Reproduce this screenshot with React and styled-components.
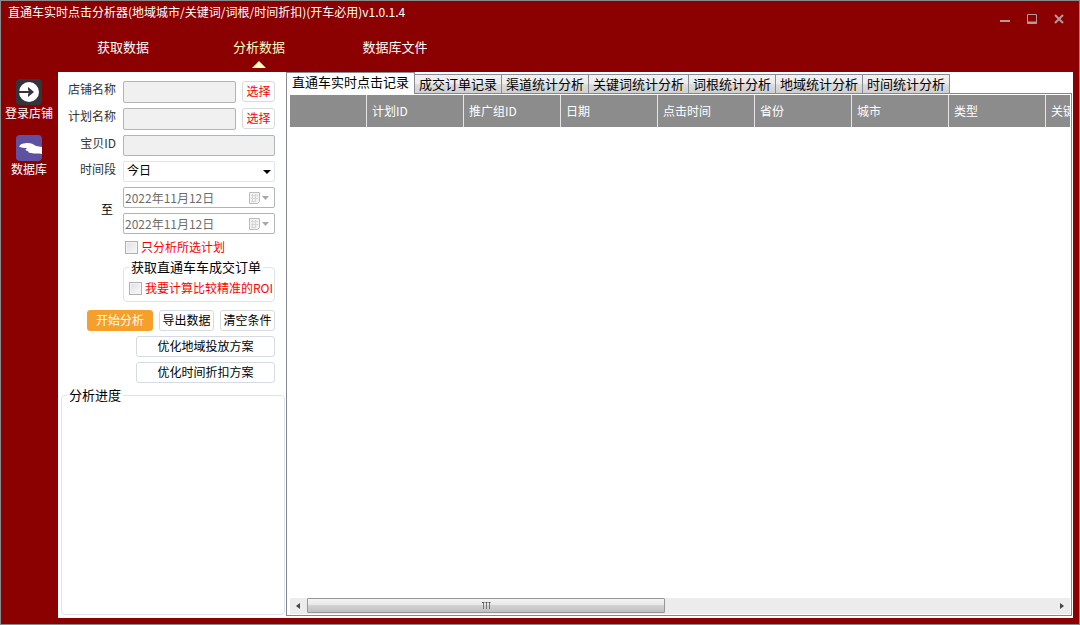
import { useState } from "react";
import styled, { createGlobalStyle } from "styled-components";

const menu = ["获取数据", "分析数据", "数据库文件"];
const abas = ["直通车实时点击记录", "成交订单记录", "渠道统计分析", "关键词统计分析", "词根统计分析", "地域统计分析", "时间统计分析"];
const colunas = ["", "计划ID", "推广组ID", "日期", "点击时间", "省份", "城市", "类型", "关键词"];

export default function App(){
    const [pagina, setPagina] = useState(1);
    const [aba, setAba] = useState(0);

    return (
        <Janela>
            <GlobalStyle />
            <Topo>
                <BarraTitulo>
                    <h1>直通车实时点击分析器(地域城市/关键词/词根/时间折扣)(开车必用)v1.0.1.4</h1>
                    <Controles>
                        <button aria-label="最小化"><svg width="11" height="11"><path d="M0 7h10" stroke="#b59a9a" strokeWidth="2" /></svg></button>
                        <button aria-label="最大化"><svg width="11" height="11"><path d="M.5 .5h9v9h-9z" fill="none" stroke="#b59a9a" /><path d="M0 8.5h10" stroke="#b59a9a" strokeWidth="2" /></svg></button>
                        <button aria-label="关闭"><svg width="11" height="11"><path d="M1 1l8 8M9 1l-8 8" stroke="#b59a9a" strokeWidth="2" /></svg></button>
                    </Controles>
                </BarraTitulo>
                <Menu>
                    {menu.map((m, i) => (
                        <ItemMenu key={m} $ativo={i === pagina} onClick={() => setPagina(i)}>
                            {m}
                            {i === pagina && <svg width="14" height="7"><path d="M7 0l7 7H0z" fill="#ffffc0" /></svg>}
                        </ItemMenu>
                    ))}
                </Menu>
            </Topo>
            <Corpo>
                <Lateral>
                    <Atalho>
                        <IconeEntrar />
                        登录店铺
                    </Atalho>
                    <Atalho>
                        <IconeBanco />
                        数据库
                    </Atalho>
                </Lateral>
                <Conteudo>
                    <Painel>
                        <Formulario>
                            <Linha $altura={22}>
                                <label htmlFor="loja">店铺名称</label>
                                <Campo id="loja" disabled />
                                <Botao $destaque>选择</Botao>
                            </Linha>
                            <Linha $altura={22}>
                                <label htmlFor="plano">计划名称</label>
                                <Campo id="plano" disabled />
                                <Botao $destaque>选择</Botao>
                            </Linha>
                            <Linha>
                                <label htmlFor="item">宝贝ID</label>
                                <Campo id="item" disabled />
                            </Linha>
                            <Linha>
                                <label htmlFor="periodo">时间段</label>
                                <Selecao>
                                    <select id="periodo" defaultValue="今日">
                                        <option>今日</option>
                                        <option>昨日</option>
                                    </select>
                                    <svg width="8" height="4"><path d="M0 0h8L4 4z" fill="#000" /></svg>
                                </Selecao>
                            </Linha>
                            <Periodo>
                                <span>至</span>
                                <Datas>
                                    <CampoData rotulo="开始日期" />
                                    <CampoData rotulo="结束日期" />
                                </Datas>
                            </Periodo>
                            <Opcoes>
                                <Marcador><input type="checkbox" />只分析所选计划</Marcador>
                                <Pedidos>
                                    <legend>获取直通车车成交订单</legend>
                                    <Marcador><input type="checkbox" />我要计算比较精准的ROI</Marcador>
                                </Pedidos>
                            </Opcoes>
                            <Acoes>
                                <Botao $principal $largura={66}>开始分析</Botao>
                                <Botao $largura={55}>导出数据</Botao>
                                <Botao $largura={55}>清空条件</Botao>
                                <Botao $largura={139}>优化地域投放方案</Botao>
                                <Botao $largura={139}>优化时间折扣方案</Botao>
                            </Acoes>
                        </Formulario>
                        <Progresso>
                            <legend>分析进度</legend>
                        </Progresso>
                    </Painel>
                    <Registros>
                        <Abas role="tablist">
                            {abas.map((a, i) => (
                                <Aba key={a} role="tab" aria-selected={i === aba} $ativa={i === aba} onClick={() => setAba(i)}>{a}</Aba>
                            ))}
                        </Abas>
                        <Quadro>
                            <AreaTabela>
                                <Tabela>
                                    <thead>
                                        <tr>{colunas.map((c, i) => <th key={i}>{c}</th>)}</tr>
                                    </thead>
                                </Tabela>
                            </AreaTabela>
                            <Rolagem>
                                <svg width="17" height="16"><path d="M10 5v6L6 8z" fill="#444" /></svg>
                                <Trilho>
                                    <Alca><svg width="9" height="7"><path d="M1.5 0v7M4.5 0v7M7.5 0v7" stroke="#777" /><path d="M0 .5h2.5M3.5 .5h2M6.5 .5h2" stroke="#555" /></svg></Alca>
                                </Trilho>
                                <svg width="17" height="16"><path d="M7 5v6l4-3z" fill="#444" /></svg>
                            </Rolagem>
                        </Quadro>
                    </Registros>
                </Conteudo>
            </Corpo>
        </Janela>
    );
}

function CampoData({ rotulo }){
    return (
        <Data>
            <input aria-label={rotulo} defaultValue="2022年11月12日" disabled />
            <svg width="22" height="14">
                <path d="M.5 1.5h10v9l-2 2h-8z" fill="#f2f2f2" stroke="#bdbdbd" />
                <path d="M2 4.5h7M2 7.5h7M2 10.5h5M3.5 3v8M6.5 3v8" stroke="#d6d6d6" />
                <path d="M13 5h7l-3.5 4z" fill="#a8a8a8" />
            </svg>
        </Data>
    );
}

function IconeEntrar(){
    return (
        <svg width="26" height="26" viewBox="0 0 26 26">
            <rect width="26" height="26" rx="4" fill="#32353d" />
            <circle cx="13" cy="13" r="10" fill="#fff" />
            <path d="M3 13h12" stroke="#32353d" strokeWidth="2" />
            <path d="M12 8l6 5-6 5v-3l2-2-2-2z" fill="#32353d" />
        </svg>
    );
}

function IconeBanco(){
    return (
        <svg width="26" height="26" viewBox="0 0 26 26">
            <rect width="26" height="26" rx="4" fill="#5e52a0" />
            <path d="M3 11.5C4 9 8 8 12 8c3 0 5 1 8 3l6 1v7c-4-1-7 0-11-1-2 0-3-1-3-2-2 0-3-1-2-2l1-1c-3 0-6 0-8-1.5z" fill="#fff" />
        </svg>
    );
}

const GlobalStyle = createGlobalStyle`
    *{
        box-sizing: border-box;
    }
    body{
        margin: 0;
        font-family: "Noto Sans CJK SC", sans-serif;
        font-size: 12px;
        line-height: 16px;
        color: #000000;
    }
    button, input, select{
        font: inherit;
        color: inherit;
        margin: 0;
        padding: 0;
    }
    svg{
        display: block;
        flex-shrink: 0;
    }
`;

const Janela = styled.div`
    height: 100vh;
    display: flex;
    flex-direction: column;
    background-color: #8b0000;
    border: 1px solid #8a8a8a;
    padding: 0 6px 6px 0;
`;
const Topo = styled.header`
    height: 71px;
    color: #ffffff;
`;
const BarraTitulo = styled.div`
    display: flex;
    justify-content: space-between;
    height: 36px;
    padding: 3px 8px 0 7px;
    h1{
        margin: 0;
        font-size: 12px;
        font-weight: 400;
    }
`;
const Controles = styled.div`
    display: flex;
    gap: 16px;
    padding-top: 10px;
    button{
        width: 11px;
        height: 11px;
        border: none;
        background: none;
    }
`;
const Menu = styled.nav`
    display: flex;
    padding-left: 54px;
`;
const ItemMenu = styled.button`
    width: 136px;
    height: 35px;
    display: flex;
    flex-direction: column;
    align-items: center;
    gap: 6px;
    padding-top: 2px;
    border: none;
    background: none;
    font-size: 13px;
    color: ${props => props.$ativo ? '#ffffc0' : '#ffffff'};
`;
const Corpo = styled.div`
    flex: 1;
    min-height: 0;
    display: flex;
`;
const Lateral = styled.aside`
    width: 57px;
    flex-shrink: 0;
    display: flex;
    flex-direction: column;
    gap: 14px;
    padding: 7px 1px 0 0;
`;
const Atalho = styled.button`
    display: flex;
    flex-direction: column;
    align-items: center;
    border: none;
    background: none;
    color: #ffffff;
`;
const Conteudo = styled.main`
    flex: 1;
    min-width: 0;
    display: flex;
    background-color: #ffffff;
`;
const Painel = styled.section`
    width: 228px;
    flex-shrink: 0;
    display: flex;
    flex-direction: column;
    padding: 9px 1px 3px 3px;
`;
const Formulario = styled.div`
    display: flex;
    flex-direction: column;
    gap: 5px;
    padding-right: 10px;
`;
const Linha = styled.div`
    display: flex;
    height: ${props => props.$altura || 21}px;
    label{
        width: 55px;
        margin-right: 7px;
        text-align: right;
        white-space: nowrap;
        color: #333333;
    }
    button{
        width: 33px;
        margin-left: 6px;
    }
`;
const Campo = styled.input`
    flex: 1;
    min-width: 0;
    border: 1px solid #b4b4b4;
    border-radius: 2px;
    background-color: #f0f0f0;
`;
const Botao = styled.button`
    width: ${props => props.$largura}px;
    height: 21px;
    padding-bottom: 2px;
    line-height: 16px;
    white-space: nowrap;
    border: 1px solid ${props => props.$principal ? '#f5a02d' : '#d5dbe0'};
    border-radius: 3px;
    background-color: ${props => props.$principal ? '#f5a02d' : '#ffffff'};
    color: ${props => props.$principal ? '#ffffff' : props.$destaque ? '#ff0000' : '#000000'};
`;
const Selecao = styled.div`
    flex: 1;
    position: relative;
    select{
        width: 100%;
        height: 100%;
        appearance: none;
        padding: 0 3px 3px;
        border: 1px solid #dfe5ea;
        border-radius: 2px;
        background-color: #ffffff;
    }
    svg{
        position: absolute;
        right: 4px;
        top: 9px;
        pointer-events: none;
    }
`;
const Periodo = styled.div`
    display: flex;
    align-items: center;
    span{
        width: 52px;
        flex-shrink: 0;
        margin-right: 10px;
        padding-bottom: 4px;
        text-align: right;
    }
`;
const Datas = styled.div`
    flex: 1;
    min-width: 0;
    display: flex;
    flex-direction: column;
    gap: 5px;
`;
const Data = styled.div`
    display: flex;
    align-items: center;
    height: 21px;
    border: 1px solid #b4b4b4;
    border-radius: 2px;
    padding: 0 3px 0 1px;
    input{
        flex: 1;
        min-width: 0;
        border: none;
        background: none;
        color: #6d6d6d;
    }
`;
const Opcoes = styled.div`
    display: flex;
    flex-direction: column;
    gap: 4px;
    margin-left: 62px;
    > label{
        padding-left: 2px;
    }
`;
const Marcador = styled.label`
    display: flex;
    align-items: center;
    gap: 3px;
    white-space: nowrap;
    color: #ff0000;
    input{
        appearance: none;
        width: 13px;
        height: 13px;
        flex-shrink: 0;
        border: 1px solid #b0b0b0;
        background: linear-gradient(135deg, #dde1e5, #f8f8f8);
        box-shadow: inset 0 0 0 1px #f4f4f4;
    }
    input:checked{
        background: #4b6a9b;
    }
`;
const Grupo = styled.fieldset`
    min-width: 0;
    margin: 0;
    border: 1px solid #dbe4ea;
    border-radius: 4px;
    legend{
        padding: 0 2px;
        font-size: 13px;
    }
`;
const Pedidos = styled(Grupo)`
    padding: 5px 0 5px 5px;
`;
const Acoes = styled.div`
    display: flex;
    flex-wrap: wrap;
    justify-content: flex-end;
    gap: 5px 6px;
    margin-top: 3px;
`;
const Progresso = styled(Grupo)`
    flex: 1;
    margin-top: 4px;
    padding: 0 5px;
`;
const Registros = styled.section`
    flex: 1;
    min-width: 0;
    display: flex;
    flex-direction: column;
    padding: 0 1px 2px 0;
`;
const Abas = styled.div`
    display: flex;
    align-items: flex-end;
    height: 21px;
`;
// a aba ativa cobre a borda superior do quadro
const Aba = styled.button`
    position: relative;
    z-index: ${props => props.$ativa ? 1 : 0};
    height: ${props => props.$ativa ? '22px' : '19px'};
    margin-bottom: ${props => props.$ativa ? '-1px' : '0'};
    padding: ${props => props.$ativa ? '0 5px 3px' : '0 4px 1px'};
    white-space: nowrap;
    font-size: 13px;
    line-height: 16px;
    border: 1px solid #898c95;
    border-width: ${props => props.$ativa ? '1px 1px 0 1px' : '1px 1px 0 0'};
    background: ${props => props.$ativa ? '#ffffff' : 'linear-gradient(#f2f2f2, #ebebeb 50%, #dddddd 50%, #cfcfcf)'};
`;
const Quadro = styled.div`
    flex: 1;
    min-height: 0;
    display: flex;
    flex-direction: column;
    border: 1px solid #828790;
    padding: 1px 1px 1px 3px;
`;
const AreaTabela = styled.div`
    flex: 1;
    overflow: hidden;
`;
const Tabela = styled.table`
    width: 853px;
    table-layout: fixed;
    border-spacing: 0;
    th{
        width: 97px;
        height: 32px;
        padding: 0 0 0 5px;
        border-right: 1px solid #e4e4e4;
        background-color: #8c8c8c;
        color: #ffffff;
        font-weight: 400;
        text-align: left;
        white-space: nowrap;
    }
    th:first-child{
        width: 77px;
    }
`;
const Rolagem = styled.div`
    display: flex;
    height: 16px;
    background-color: #ececec;
`;
const Trilho = styled.div`
    flex: 1;
`;
const Alca = styled.div`
    width: 48%;
    height: 15px;
    display: flex;
    align-items: center;
    justify-content: center;
    border: 1px solid #979797;
    border-radius: 1px;
    background: linear-gradient(#f4f4f4, #e6e6e6 50%, #d2d2d4 50%, #bfbfc2);
`;
